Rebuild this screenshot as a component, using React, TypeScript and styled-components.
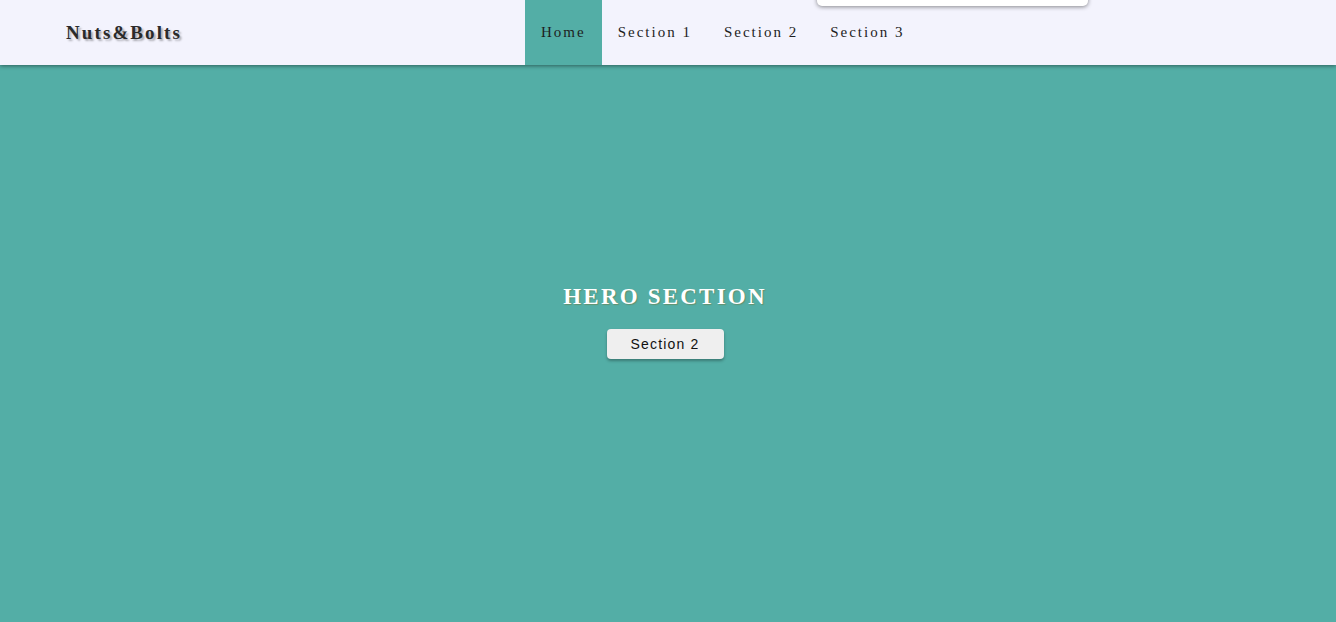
import React from "react";
import styled, { createGlobalStyle } from "styled-components";

const Global = createGlobalStyle`
  html, body { margin: 0; padding: 0; }
  body { font-family: "Liberation Serif", "Times New Roman", serif; background: #53aea6; overflow: hidden; }
`;

const Page = styled.div`
  width: 1336px;
  height: 622px;
  display: flex;
  flex-direction: column;
  position: relative;
`;

const Nav = styled.nav`
  height: 65px;
  background: #f3f3fd;
  display: flex;
  align-items: stretch;
  box-shadow: 0 1px 4px rgba(0, 0, 0, 0.45);
  position: relative;
  z-index: 2;
`;

const Logo = styled.div`
  width: 459px;
  padding-left: 66px;
  display: flex;
  align-items: center;
  font-weight: bold;
  font-size: 19px;
  letter-spacing: 2.1px;
  color: #2a2a2a;
  text-shadow: 2px 2px 2px rgba(0, 0, 0, 0.3);
`;

const Links = styled.ul`
  list-style: none;
  margin: 0;
  padding: 0;
  display: flex;
`;

const LinkItem = styled.li<{ $active?: boolean }>`
  display: flex;
  align-items: center;
  padding: 0 16px;
  font-size: 15px;
  letter-spacing: 2px;
  color: #1e1e1e;
  background: ${(p) => (p.$active ? "#53aea6" : "transparent")};
  cursor: pointer;
`;

const Popup = styled.div`
  position: absolute;
  left: 817px;
  top: -40px;
  width: 271px;
  height: 46px;
  background: #ffffff;
  border-radius: 5px;
  box-shadow: 0 1px 4px rgba(0, 0, 0, 0.45);
  z-index: 3;
`;

const PopupField = styled.div`
  position: absolute;
  left: 176px;
  bottom: 6px;
  width: 77px;
  height: 20px;
  border-bottom: 1px solid #cfcfcf;
  border-radius: 0 0 3px 3px;
`;

const Hero = styled.section`
  flex: 1;
  background: #53aea6;
  display: flex;
  flex-direction: column;
  align-items: center;
  padding: 219px 6px 0 0;
  box-sizing: border-box;
`;

const Title = styled.h1`
  margin: 0;
  font-size: 23px;
  font-weight: bold;
  letter-spacing: 2.2px;
  color: #ffffff;
  text-shadow: 1px 1px 1px rgba(120, 110, 40, 0.45);
  line-height: 26px;
`;

const Button = styled.button`
  margin-top: 19px;
  width: 117px;
  height: 30px;
  border: none;
  border-radius: 4px;
  background: #efefef;
  box-shadow: 0 2px 3px rgba(0, 0, 0, 0.3);
  font-family: "Liberation Sans", Arial, sans-serif;
  font-size: 14px;
  letter-spacing: 1.2px;
  color: #111;
  cursor: pointer;
`;

export default function App() {
  return (
    <Page>
      <Global />
      <Nav>
        <Logo>Nuts&amp;Bolts</Logo>
        <Links>
          <LinkItem $active>Home</LinkItem>
          <LinkItem>Section 1</LinkItem>
          <LinkItem>Section 2</LinkItem>
          <LinkItem>Section 3</LinkItem>
        </Links>
      </Nav>
      <Popup>
        <PopupField />
      </Popup>
      <Hero>
        <Title>HERO SECTION</Title>
        <Button>Section 2</Button>
      </Hero>
    </Page>
  );
}
